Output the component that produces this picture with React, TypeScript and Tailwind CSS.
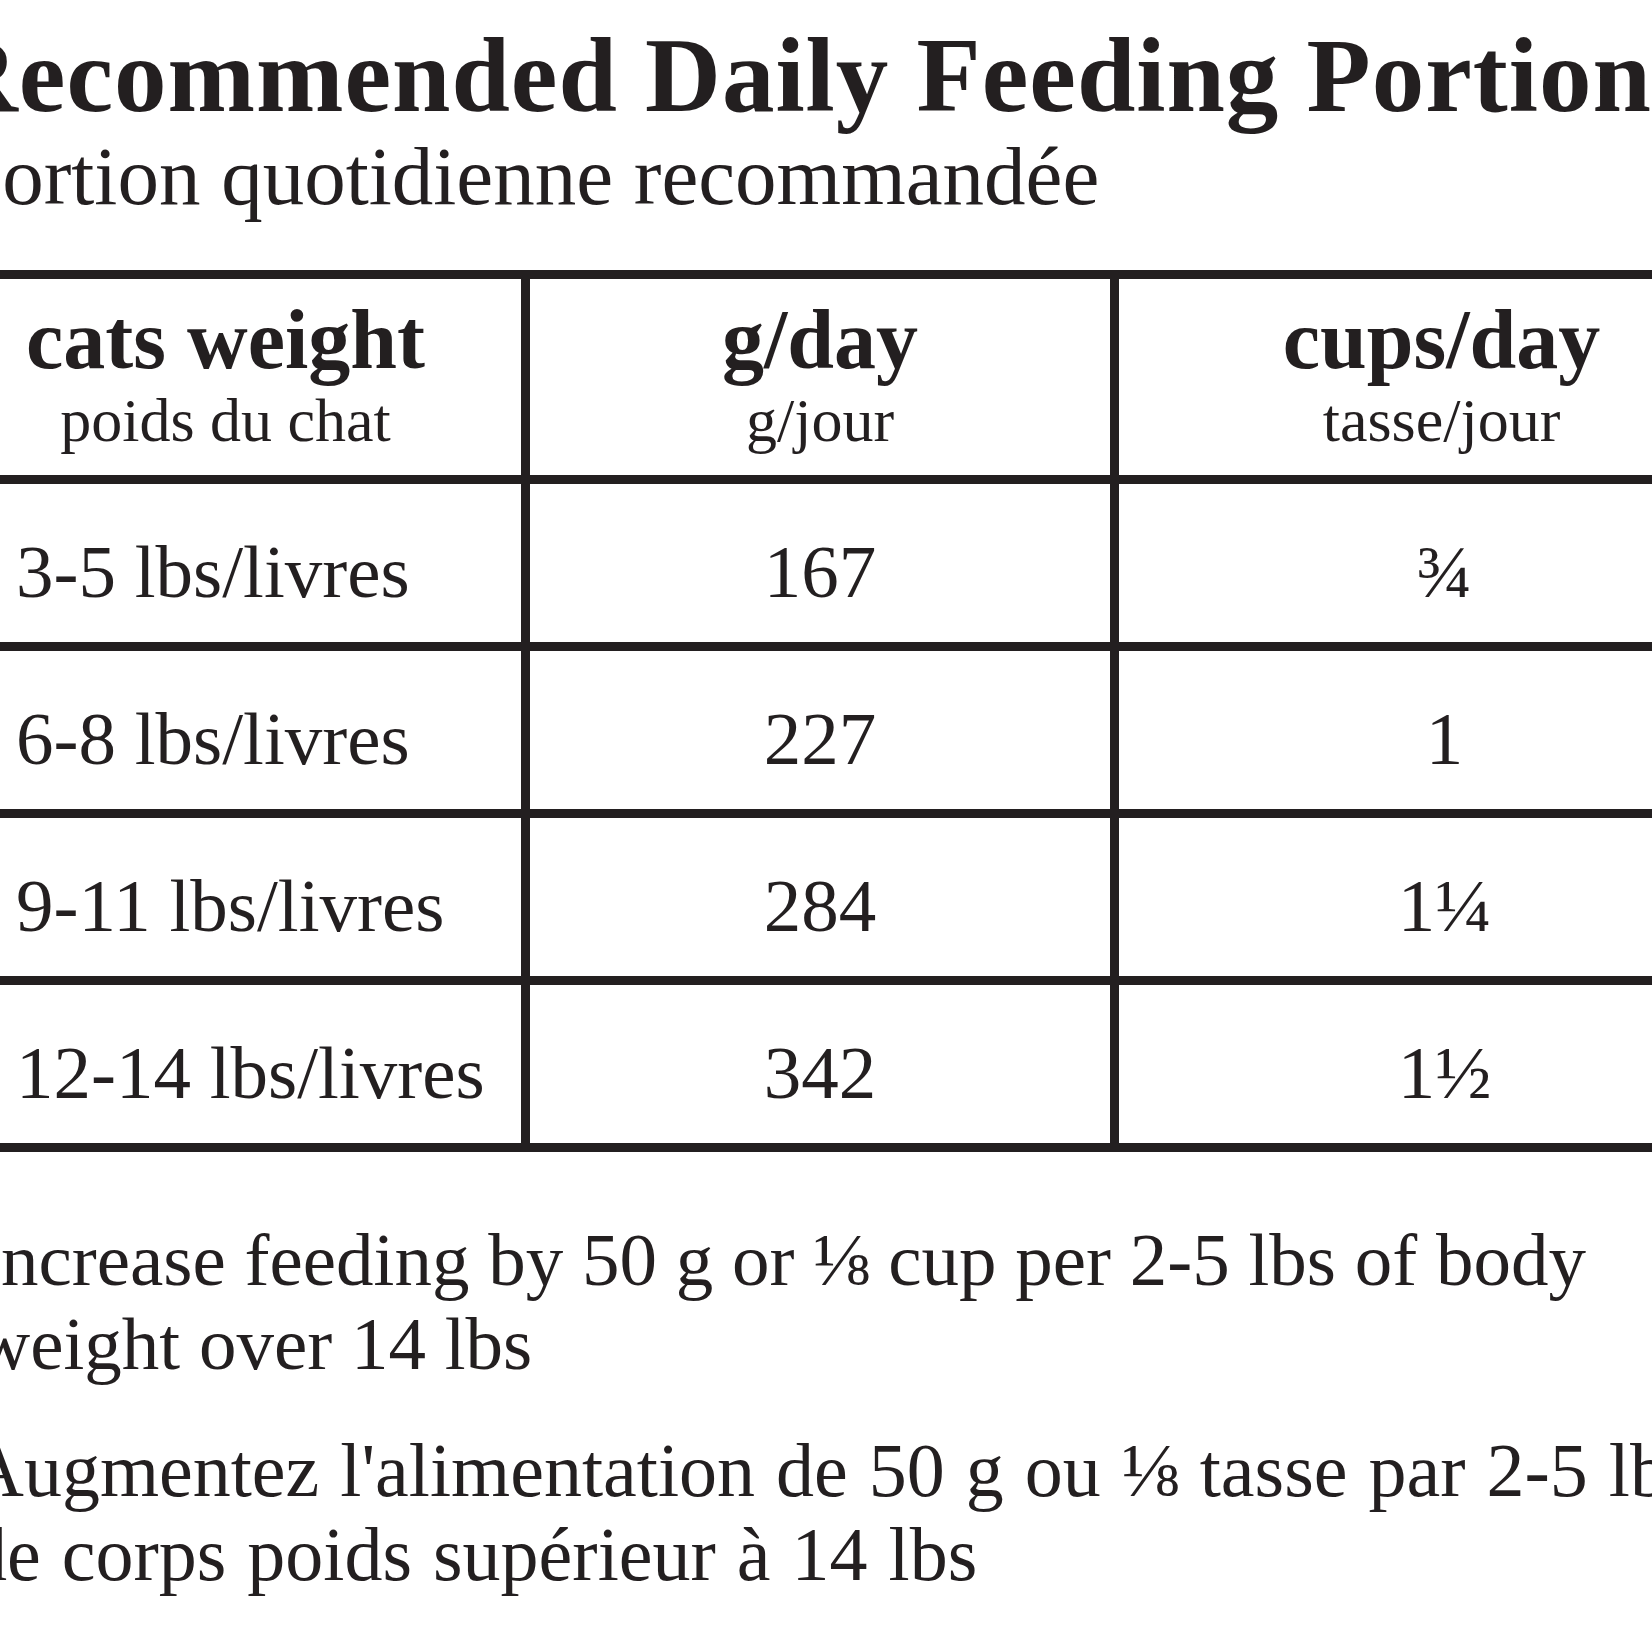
import React from 'react';

type Row = { weight: string; grams: string; cups: string };

const rows: Row[] = [
  { weight: '3-5 lbs/livres', grams: '167', cups: '¾' },
  { weight: '6-8 lbs/livres', grams: '227', cups: '1' },
  { weight: '9-11 lbs/livres', grams: '284', cups: '1¼' },
  { weight: '12-14 lbs/livres', grams: '342', cups: '1½' },
];

const HeaderCell: React.FC<{ title: string; sub: string; last?: boolean }> = ({ title, sub, last }) => (
  <div className={`flex flex-col items-center pt-[19px] ${last ? '' : 'border-r-[9px] border-[#231f20]'}`}>
    <span className="text-[84px] leading-none font-bold whitespace-nowrap">{title}</span>
    <span className="mt-[7px] text-[62px] leading-none whitespace-nowrap">{sub}</span>
  </div>
);

export default function App() {
  return (
    <div className="w-[1652px] h-[1652px] overflow-hidden bg-white text-[#231f20] font-['Liberation_Serif',serif]">
      {/* Heading, cropped on the left like the label photo */}
      <h1 className="ml-[-58px] pt-[23px] whitespace-nowrap text-[105px] leading-none font-bold tracking-[1px]">
        Recommended Daily Feeding Portion
      </h1>
      <p className="ml-[-44px] mt-[7px] whitespace-nowrap text-[83px] leading-none">
        Portion quotidienne recommandée
      </p>

      {/* Feeding table */}
      <div className="ml-[-70px] mt-[52px] w-[1834px] border-t-[9px] border-[#231f20]">
        <div className="grid h-[205px] grid-cols-[600px_589px_645px] border-b-[9px] border-[#231f20]">
          <HeaderCell title="cats weight" sub="poids du chat" />
          <HeaderCell title="g/day" sub="g/jour" />
          <HeaderCell title="cups/day" sub="tasse/jour" last />
        </div>
        {rows.map((r) => (
          <div
            key={r.weight}
            className="grid h-[167px] grid-cols-[600px_589px_645px] border-b-[9px] border-[#231f20] text-[75px] leading-none"
          >
            <div className="border-r-[9px] border-[#231f20] pl-[86px] pt-[50px] whitespace-nowrap">{r.weight}</div>
            <div className="border-r-[9px] border-[#231f20] pt-[50px] text-center">{r.grams}</div>
            <div className="pl-[6px] pt-[50px] text-center whitespace-nowrap">{r.cups}</div>
          </div>
        ))}
      </div>

      {/* Notes */}
      <p className="ml-[-24px] mt-[66px] whitespace-nowrap text-[75px] leading-[84px]">
        Increase feeding by 50 g or ⅛ cup per 2-5 lbs of body
        <br />
        weight over 14 lbs
      </p>
      <p className="ml-[-31px] mt-[42px] whitespace-nowrap text-[76px] leading-[84px] [word-spacing:2px]">
        Augmentez l'alimentation de 50 g ou ⅛ tasse par 2-5 lbs
        <br />
        de corps poids supérieur à 14 lbs
      </p>
    </div>
  );
}
